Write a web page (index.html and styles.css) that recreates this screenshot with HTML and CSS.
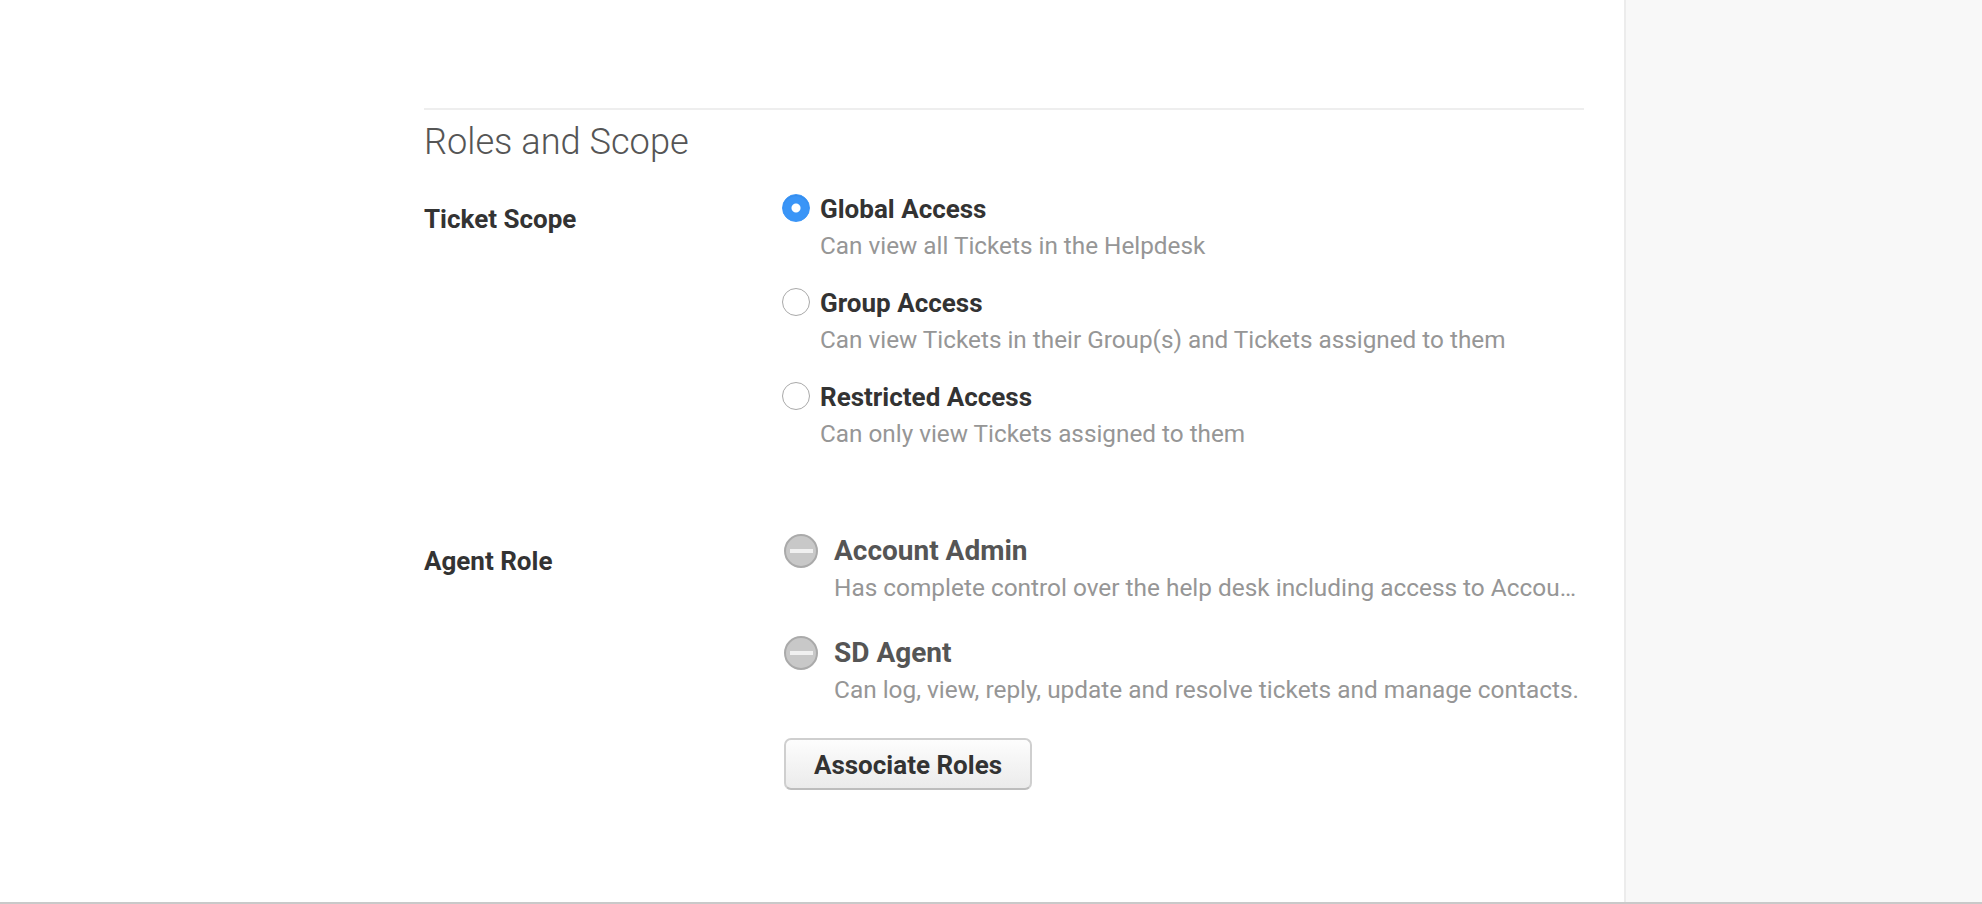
FILE: index.html
```html
<!DOCTYPE html>
<html lang="en">
<head>
<meta charset="utf-8">
<title>Roles and Scope</title>
<link rel="stylesheet" href="styles.css">
</head>
<body>
<div class="page">
  <main class="main">
    <section class="panel">
      <h2 class="title">Roles and Scope</h2>
      <div class="row scope-row">
        <div class="row-label">Ticket Scope</div>
        <div class="options">
          <div class="option">
            <span class="radio radio-on"></span>
            <div class="option-text">
              <div class="option-name">Global Access</div>
              <div class="option-desc">Can view all Tickets in the Helpdesk</div>
            </div>
          </div>
          <div class="option">
            <span class="radio"></span>
            <div class="option-text">
              <div class="option-name">Group Access</div>
              <div class="option-desc">Can view Tickets in their Group(s) and Tickets assigned to them</div>
            </div>
          </div>
          <div class="option">
            <span class="radio"></span>
            <div class="option-text">
              <div class="option-name">Restricted Access</div>
              <div class="option-desc">Can only view Tickets assigned to them</div>
            </div>
          </div>
        </div>
      </div>
      <div class="row role-row">
        <div class="row-label">Agent Role</div>
        <div class="roles">
          <div class="role">
            <span class="minus"></span>
            <div class="role-text">
              <div class="role-name">Account Admin</div>
              <div class="role-desc">Has complete control over the help desk including access to Account, Billing</div>
            </div>
          </div>
          <div class="role">
            <span class="minus"></span>
            <div class="role-text">
              <div class="role-name">SD Agent</div>
              <div class="role-desc">Can log, view, reply, update and resolve tickets and manage contacts.</div>
            </div>
          </div>
          <button class="btn" type="button">Associate Roles</button>
        </div>
      </div>
    </section>
  </main>
  <aside class="side"></aside>
</div>
</body>
</html>
```
FILE: styles.css
```css
* { box-sizing: border-box; }
html, body { margin: 0; height: 100%; }
body { font-family: Roboto, "Liberation Sans", sans-serif; background: #fff; overflow: hidden; }
.page { display: flex; height: 904px; border-bottom: 2px solid #c9c9c9; }
.main { width: 1624px; padding: 108px 0 0 424px; }
.panel { width: 1160px; border-top: 2px solid #eeeeee; }
.side { flex: 1; background: #f8f8f8; border-left: 2px solid #ececec; }
.title { margin: 12px 0 0; font-weight: 300; font-size: 36.2px; line-height: 40px; color: #555555; }
.row { display: flex; }
.row-label { width: 358px; font-weight: 700; font-size: 26px; line-height: 30px; color: #333333; }
.scope-row { margin-top: 42px; }
.options { display: flex; flex-direction: column; gap: 22px; margin-top: -13px; }
.option { display: flex; gap: 10px; }
.radio { width: 28px; height: 28px; margin-top: 3px; border-radius: 50%; border: 1px solid #a9a9a9; background: #fff; flex: none; }
.radio-on { background: radial-gradient(circle, #fff 0 4px, #3a95f7 5px); border-color: #3a95f7; box-shadow: inset 0 1px 1px rgba(0, 60, 130, 0.12); }
.option-name { font-weight: 700; font-size: 26px; line-height: 37px; color: #333333; }
.option-desc { font-weight: 400; font-size: 24.3px; line-height: 35px; color: #969696; }
.role-row { margin-top: 95px; }
.roles { display: flex; flex-direction: column; margin: -14px 0 0 2px; }
.role { display: flex; gap: 16px; height: 102px; }
.minus { width: 34px; height: 34px; margin-top: 2px; border-radius: 50%; border: 2px solid #aaaaaa; background: #c8c8c8; flex: none; display: flex; align-items: center; justify-content: center; }
.minus::before { content: ""; width: 23px; height: 4px; background: #f0f0f0; }
.role-text { width: 748px; }
.role-name { font-weight: 700; font-size: 28px; line-height: 38px; color: #555555; }
.role-desc { font-weight: 400; font-size: 24.4px; line-height: 36px; color: #969696; white-space: nowrap; overflow: hidden; text-overflow: ellipsis; }
.btn { width: 248px; height: 52px; margin-top: 2px; border: 2px solid #cfcfcf; border-bottom-color: #bdbdbd; border-radius: 7px; background: linear-gradient(#fdfdfd, #ebebeb); font-family: inherit; font-weight: 700; font-size: 26px; color: #333333; padding: 2px 0 0; }
```
